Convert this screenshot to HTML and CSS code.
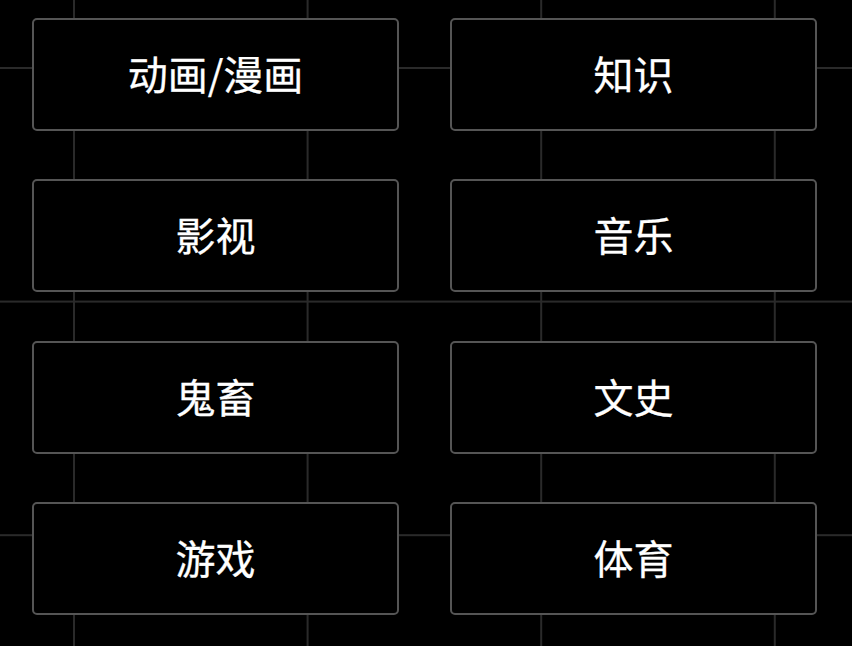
FILE: index.html
```html
<!DOCTYPE html>
<html lang="zh-CN">
<head>
<meta charset="utf-8">
<title>分区</title>
<link rel="stylesheet" href="styles.css">
</head>
<body>
<div class="page">
  <div class="grid">
    <div class="tile">动画/漫画</div>
    <div class="tile">知识</div>
    <div class="tile">影视</div>
    <div class="tile">音乐</div>
    <div class="tile">鬼畜</div>
    <div class="tile">文史</div>
    <div class="tile">游戏</div>
    <div class="tile">体育</div>
  </div>
</div>
</body>
</html>
```
FILE: styles.css
```css
html, body {
  margin: 0;
  padding: 0;
  background: #000;
}
.page {
  width: 852px;
  height: 646px;
  box-sizing: border-box;
  padding: 18px 35px 0 32px;
  background-color: #000;
  background-image:
    linear-gradient(to right, #2a2a2a 0, #2a2a2a 2px, transparent 2px),
    linear-gradient(to bottom, #2a2a2a 0, #2a2a2a 2px, transparent 2px);
  background-size: 233.6px 233.6px;
  background-position: 73px 67px;
  overflow: hidden;
}
.grid {
  display: grid;
  grid-template-columns: 367px 367px;
  grid-auto-rows: 113px;
  column-gap: 51px;
  row-gap: 48.3px;
}
.tile {
  box-sizing: border-box;
  border: 2px solid #555;
  border-radius: 5px;
  background: #000;
  color: #fff;
  font-family: "Noto Sans CJK SC", "Noto Sans", sans-serif;
  font-size: 40px;
  display: flex;
  align-items: center;
  justify-content: center;
  padding-bottom: 3px;
  -webkit-text-stroke: 0.3px #fff;
}
```
